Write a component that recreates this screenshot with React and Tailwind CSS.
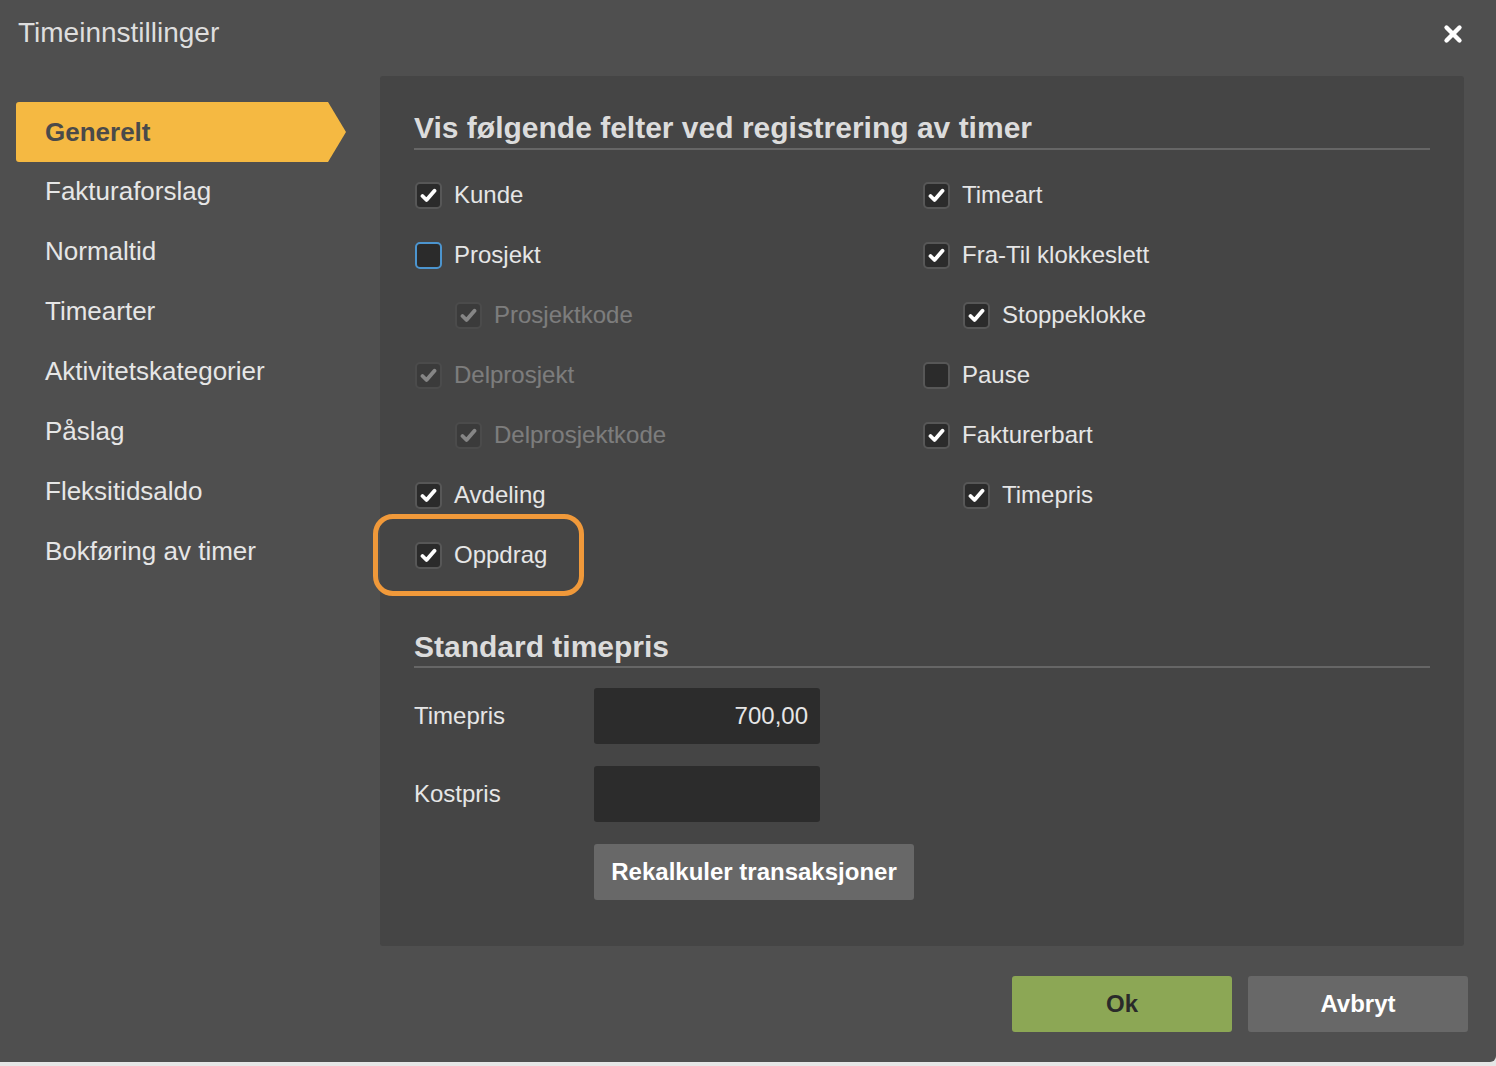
import { X } from "lucide-react";

const sidebar = [
  "Generelt",
  "Fakturaforslag",
  "Normaltid",
  "Timearter",
  "Aktivitetskategorier",
  "Påslag",
  "Fleksitidsaldo",
  "Bokføring av timer",
];

const leftFields = [
  { label: "Kunde", checked: true },
  { label: "Prosjekt", checked: false, focus: true },
  { label: "Prosjektkode", checked: true, sub: true, disabled: true },
  { label: "Delprosjekt", checked: true, disabled: true },
  { label: "Delprosjektkode", checked: true, sub: true, disabled: true },
  { label: "Avdeling", checked: true },
  { label: "Oppdrag", checked: true, marked: true },
];

const rightFields = [
  { label: "Timeart", checked: true },
  { label: "Fra-Til klokkeslett", checked: true },
  { label: "Stoppeklokke", checked: true, sub: true },
  { label: "Pause", checked: false },
  { label: "Fakturerbart", checked: true },
  { label: "Timepris", checked: true, sub: true },
];

function Checkbox({ checked, focus }) {
  return (
    <div
      className={
        "w-[27px] h-[27px] rounded-[5px] bg-[#2b2b2b] border-2 flex items-center justify-center shrink-0 " +
        (focus ? "border-[#4c95cf]" : "border-[#575757]")
      }
    >
      {checked && (
        <svg width="17" height="15" viewBox="0 0 17 15">
          <path d="M2.5 8 L6.5 12 L14.5 2.8" fill="none" stroke="#fff" strokeWidth="3.8" strokeLinecap="round" strokeLinejoin="round" />
        </svg>
      )}
    </div>
  );
}

function FieldRow({ field }) {
  return (
    <div className={"relative h-[60px] flex items-center " + (field.sub ? "pl-[41px]" : "pl-px")}>
      {/* orange markering rundt Oppdrag */}
      {field.marked && (
        <div className="absolute left-[-41px] top-[-11px] w-[211px] h-[82px] rounded-[20px] border-[5px] border-[#f0993a]" />
      )}
      <div className={"flex items-center gap-[12px] " + (field.disabled ? "opacity-35" : "")}>
        <Checkbox checked={field.checked} focus={field.focus} />
        <span className="text-[24px] text-[#e6e6e6]">{field.label}</span>
      </div>
    </div>
  );
}

export default function App() {
  return (
    <div className="w-[1496px] h-[1066px] bg-[#e6e6e6] font-['Liberation_Sans',Arial,sans-serif]">
      <div className="w-full h-[1062px] bg-[#4f4f4f] rounded-br-[6px] flex flex-col">
        {/* Tittel */}
        <div className="h-[76px] flex items-start justify-between pl-[18px] pr-[30px] pt-[15px]">
          <h1 className="text-[28px] leading-[36px] text-[#dedede]">Timeinnstillinger</h1>
          <X className="mt-[6px] text-white" size={26} strokeWidth={4} />
        </div>

        <div className="flex flex-1">
          {/* Meny */}
          <div className="w-[380px] pl-[16px] pt-[26px]">
            {sidebar.map((item, i) =>
              i === 0 ? (
                <div
                  key={item}
                  className="w-[330px] h-[60px] flex items-center pl-[29px] bg-[#f5b942] rounded-l-[3px] [clip-path:polygon(0_0,312px_0,330px_50%,312px_100%,0_100%)]"
                >
                  <span className="text-[26px] leading-[30px] font-bold text-[#4a4a4a]">{item}</span>
                </div>
              ) : (
                <div key={item} className="h-[60px] flex items-center pl-[29px] pb-[3px]">
                  <span className="text-[26px] leading-[30px] text-[#e6e6e6]">{item}</span>
                </div>
              )
            )}
          </div>

          <div className="flex flex-col">
            {/* Innhold */}
            <div className="w-[1084px] h-[870px] bg-[#454545] rounded-[3px] px-[34px] pt-[34px]">
              <h2 className="text-[30px] leading-[36px] font-bold text-[#dcdcdc] border-b-2 border-[#666] pb-[2px]">
                Vis følgende felter ved registrering av timer
              </h2>
              <div className="flex pt-[15px]">
                <div className="w-[508px]">
                  {leftFields.map((f) => (
                    <FieldRow key={f.label} field={f} />
                  ))}
                </div>
                <div>
                  {rightFields.map((f) => (
                    <FieldRow key={f.label} field={f} />
                  ))}
                </div>
              </div>

              <h2 className="mt-[44px] text-[30px] leading-[36px] font-bold text-[#dcdcdc] border-b-2 border-[#666] pb-px">
                Standard timepris
              </h2>

              <div className="mt-[20px] flex flex-col gap-[22px]">
                <div className="flex items-center">
                  <span className="w-[180px] text-[24px] text-[#e6e6e6]">Timepris</span>
                  <div className="w-[226px] h-[56px] bg-[#2c2c2c] rounded-[3px] flex items-center justify-end pr-[12px] text-[24px] text-[#e6e6e6]">
                    700,00
                  </div>
                </div>
                <div className="flex items-center">
                  <span className="w-[180px] text-[24px] text-[#e6e6e6]">Kostpris</span>
                  <div className="w-[226px] h-[56px] bg-[#2c2c2c] rounded-[3px]" />
                </div>
                <div className="flex">
                  <div className="w-[180px]" />
                  <button className="w-[320px] h-[56px] bg-[#686868] rounded-[3px] text-[24px] font-bold text-white">
                    Rekalkuler transaksjoner
                  </button>
                </div>
              </div>
            </div>

            {/* Knapper */}
            <div className="flex justify-end gap-[16px] mt-[30px] mr-[-4px]">
              <button className="w-[220px] h-[56px] bg-[#8ca755] rounded-[3px] text-[24px] font-bold text-[#2a2a2a]">Ok</button>
              <button className="w-[220px] h-[56px] bg-[#686868] rounded-[3px] text-[24px] font-bold text-white">Avbryt</button>
            </div>
          </div>
        </div>
      </div>
    </div>
  );
}
